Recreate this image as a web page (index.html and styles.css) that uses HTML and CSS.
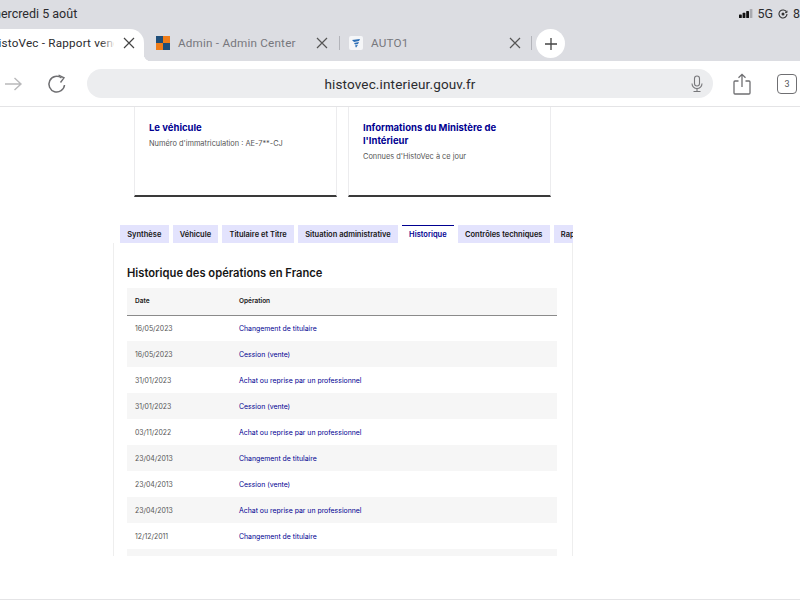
FILE: index.html
```html
<!DOCTYPE html>
<html lang="fr">
<head>
  <meta charset="UTF-8">
  <meta name="viewport" content="width=device-width, initial-scale=1.0">
  <title>HistoVec - Rapport vendeur</title>
  <link rel="stylesheet" href="styles.css">
</head>
<body>
  <header class="chrome">
    <div class="status-bar">
      <div class="status-date">mercredi 5 août</div>
      <div class="status-right">
        <svg class="signal" width="15" height="9" viewBox="0 0 15 9">
          <rect x="0" y="5.5" width="2.8" height="3.5" rx=".6" fill="#111"/>
          <rect x="3.6" y="3.8" width="2.8" height="5.2" rx=".6" fill="#111"/>
          <rect x="7.2" y="2" width="2.8" height="7" rx=".6" fill="#111"/>
          <rect x="10.8" y="0" width="2.6" height="9" rx=".6" fill="#a9aab0"/>
        </svg>
        <span>5G</span>
        <svg width="10" height="10" viewBox="0 0 10 10" fill="none" stroke="#333" stroke-width="1.1">
          <path d="M8.6 3.2A4 4 0 1 0 9 5"/>
          <path d="M9 1.6v2H7" stroke-width=".9"/>
          <circle cx="5" cy="5" r="1.5" fill="#333" stroke="none"/>
        </svg>
        <span>82</span>
      </div>
    </div>
    <div class="tab-strip">
      <div class="browser-tab active">
        <span class="tab-label">HistoVec - Rapport vendeur</span>
        <span class="tab-fade"></span>
        <svg class="tab-close" width="12" height="12" viewBox="0 0 12 12"><path d="M1 1l10 10M11 1L1 11" stroke="#444" stroke-width="1.2"/></svg>
      </div>
      <div class="browser-tab admin">
        <svg class="favicon" width="14" height="14" viewBox="0 0 14 14">
          <rect width="7" height="7" fill="#1f4e79"/>
          <rect x="7" width="7" height="7" fill="#ef7d1a"/>
          <rect y="7" width="7" height="7" fill="#ef7d1a"/>
          <rect x="7" y="7" width="7" height="7" fill="#1f4e79"/>
        </svg>
        <span class="tab-label">Admin - Admin Center</span>
        <svg class="tab-close" width="12" height="12" viewBox="0 0 12 12"><path d="M1 1l10 10M11 1L1 11" stroke="#555" stroke-width="1.2"/></svg>
      </div>
      <div class="tab-sep"></div>
      <div class="browser-tab auto">
        <svg class="favicon" width="14" height="14" viewBox="0 0 14 14">
          <rect width="14" height="14" rx="2" fill="#f5f6f8"/>
          <path d="M3 4l8-1-1 2-5 1zM5 7l5-1-1 2-3 .6zM6 9.4l3-.6-2 3z" fill="#2a6db5"/>
        </svg>
        <span class="tab-label">AUTO1</span>
        <svg class="tab-close" width="12" height="12" viewBox="0 0 12 12"><path d="M1 1l10 10M11 1L1 11" stroke="#555" stroke-width="1.2"/></svg>
      </div>
      <div class="tab-sep"></div>
      <div class="new-tab">
        <svg width="14" height="14" viewBox="0 0 14 14"><path d="M7 1v12M1 7h12" stroke="#444" stroke-width="1.3"/></svg>
      </div>
    </div>
    <div class="toolbar">
      <svg class="nav-arrow" width="20" height="16" viewBox="0 0 20 16" fill="none" stroke="#b9b9bb" stroke-width="1.4">
        <path d="M2 8h16M11.5 2l6.500 6-6.500 6"/>
      </svg>
      <svg class="reload" width="20" height="20" viewBox="0 0 20 20" fill="none" stroke="#6f6f72" stroke-width="1.5">
        <path d="M17.500 11a7.800 7.800 0 1 1-3-7"/>
        <path d="M11.500 1l5.500 2.800-3.500 4.700" stroke-width="1.400"/>
      </svg>
      <div class="address-bar">
        <span class="address-text">histovec.interieur.gouv.fr</span>
        <svg class="mic" width="12" height="18" viewBox="0 0 12 18" fill="none" stroke="#77777a" stroke-width="1.100">
          <rect x="3.500" y="1" width="5" height="10" rx="2.500"/>
          <path d="M1 8.500a5 5 0 0 0 10 0M6 13.500V16M2.500 16.500h7"/>
        </svg>
      </div>
      <svg class="share" width="18" height="22" viewBox="0 0 18 22" fill="none" stroke="#6f6f72" stroke-width="1.300">
        <path d="M5.500 8H2a1 1 0 0 0-1 1v11a1 1 0 0 0 1 1h14a1 1 0 0 0 1-1V9a1 1 0 0 0-1-1h-3.500"/>
        <path d="M9 14V1.500M5.500 4.800L9 1.300l3.500 3.500"/>
      </svg>
      <div class="tab-count">3</div>
    </div>
  </header>

  <main class="page">
    <section class="cards">
      <div class="info-card">
        <h3>Le véhicule</h3>
        <p>Numéro d'immatriculation : AE-7**-CJ</p>
      </div>
      <div class="info-card">
        <h3>Informations du Ministère de l'Intérieur</h3>
        <p>Connues d'HistoVec à ce jour</p>
      </div>
    </section>

    <nav class="tabs">
      <div class="tab">Synthèse</div>
      <div class="tab">Véhicule</div>
      <div class="tab">Titulaire et Titre</div>
      <div class="tab">Situation administrative</div>
      <div class="tab selected">Historique</div>
      <div class="tab">Contrôles techniques</div>
      <div class="tab">Rapport</div>
    </nav>

    <section class="panel">
      <h2>Historique des opérations en France</h2>
      <table>
        <thead>
          <tr><th class="col-date">Date</th><th>Opération</th></tr>
        </thead>
        <tbody>
          <tr><td>16/05/2023</td><td>Changement de titulaire</td></tr>
          <tr><td>16/05/2023</td><td>Cession (vente)</td></tr>
          <tr><td>31/01/2023</td><td>Achat ou reprise par un professionnel</td></tr>
          <tr><td>31/01/2023</td><td>Cession (vente)</td></tr>
          <tr><td>03/11/2022</td><td>Achat ou reprise par un professionnel</td></tr>
          <tr><td>23/04/2013</td><td>Changement de titulaire</td></tr>
          <tr><td>23/04/2013</td><td>Cession (vente)</td></tr>
          <tr><td>23/04/2013</td><td>Achat ou reprise par un professionnel</td></tr>
          <tr><td>12/12/2011</td><td>Changement de titulaire</td></tr>
          <tr><td>12/12/2011</td><td>Cession (vente)</td></tr>
        </tbody>
      </table>
    </section>
  </main>

  <div class="bottom-line"></div>
</body>
</html>
```

FILE: styles.css
```css
* {
  box-sizing: border-box;
  margin: 0;
  padding: 0;
}

html, body {
  height: 600px;
  overflow: hidden;
}

body {
  display: flex;
  flex-direction: column;
  background-color: #ffffff;
  font-family: Inter, "Liberation Sans", sans-serif;
}

/* browser chrome */
.chrome {
  flex: none;
  height: 107px;
  border-bottom: 1px solid #e4e4e6;
  background-color: #ffffff;
}

.status-bar {
  display: flex;
  justify-content: space-between;
  align-items: center;
  height: 26px;
  background-color: #dcdde2;
  font-family: Roboto, sans-serif;
  font-size: 12.500px;
  color: #2b2b2e;
  overflow: hidden;
}

.status-date {
  margin-left: -10px;
}

.status-right {
  display: flex;
  align-items: center;
  gap: 5px;
  margin-right: -7px;
  margin-top: 1px;
}

.signal {
  margin-right: -2px;
}

.tab-strip {
  display: flex;
  align-items: flex-start;
  height: 35px;
  padding-top: 3px;
  background-color: #dcdde2;
  font-family: Roboto, sans-serif;
  font-size: 11.700px;
  letter-spacing: .2px;
  color: #77777d;
}

.browser-tab {
  display: flex;
  align-items: center;
  height: 32px;
  padding-bottom: 4px;
  flex: none;
  white-space: nowrap;
}

.browser-tab.active {
  position: relative;
  width: 144px;
  background-color: #ffffff;
  border-radius: 0 14px 0 0;
  color: #2b2b2e;
}

/* little flare where the active tab meets the toolbar */
.browser-tab.active::after {
  content: "";
  position: absolute;
  left: 100%;
  bottom: 0;
  width: 7px;
  height: 7px;
  background: radial-gradient(circle at 100% 0, #dcdde2 7px, #ffffff 7.500px);
}

.browser-tab.active .tab-label {
  margin-left: -10px;
  width: 124px;
  flex: none;
  overflow: hidden;
}

.browser-tab.active .tab-close {
  position: absolute;
  left: 123px;
  top: 8px;
}

.tab-fade {
  position: absolute;
  left: 100px;
  top: 0;
  width: 16px;
  height: 100%;
  background: linear-gradient(to right, rgba(255, 255, 255, 0), #ffffff);
}

.browser-tab.admin {
  width: 195px;
  padding-left: 12px;
}

.browser-tab.admin .favicon {
  margin-right: 8px;
}

.browser-tab.admin .tab-close {
  margin-left: auto;
  margin-right: 11px;
}

.browser-tab.auto {
  width: 191px;
  padding-left: 9px;
}

.browser-tab.auto .favicon {
  margin-right: 8px;
}

.browser-tab.auto .tab-close {
  margin-left: auto;
  margin-right: 10px;
}

.tab-sep {
  flex: none;
  width: 1px;
  height: 14px;
  margin-top: 7px;
  background-color: #b3b4ba;
}

.new-tab {
  flex: none;
  display: flex;
  align-items: center;
  justify-content: center;
  width: 29px;
  height: 29px;
  margin-left: 4px;
  background-color: #ffffff;
  border-radius: 50%;
}

.toolbar {
  display: flex;
  align-items: center;
  height: 45px;
}

.nav-arrow {
  flex: none;
  margin-left: 3px;
}

.reload {
  flex: none;
  margin-left: 24px;
}

.address-bar {
  flex: none;
  position: relative;
  display: flex;
  align-items: center;
  justify-content: center;
  width: 626px;
  height: 29px;
  margin-left: 20px;
  background-color: #ecedef;
  border-radius: 15px;
  font-family: Roboto, sans-serif;
  font-size: 13.500px;
  letter-spacing: .15px;
  color: #2b2b2e;
}

.mic {
  position: absolute;
  right: 10px;
  top: 6px;
}

.share {
  flex: none;
  margin-left: 20px;
}

.tab-count {
  flex: none;
  display: flex;
  align-items: center;
  justify-content: center;
  width: 20px;
  height: 20px;
  margin-left: 26px;
  border: 1.300px solid #6f6f72;
  border-radius: 4px;
  font-family: Roboto, sans-serif;
  font-size: 9px;
  color: #55555a;
}

/* page content */
.page {
  flex: none;
  height: 449px;
  overflow: hidden;
}

.cards {
  display: flex;
  gap: 11px;
  margin-left: 134px;
}

.info-card {
  width: 203px;
  height: 90px;
  padding: 14px 14px 0;
  border-left: 1px solid #ececee;
  border-right: 1px solid #ececee;
  border-bottom: 2px solid #3a3a3a;
}

.info-card h3 {
  font-size: 9.500px;
  line-height: 13px;
  font-weight: 700;
  color: #000091;
}

.info-card p {
  margin-top: 4px;
  font-size: 7.400px;
  line-height: 12px;
  color: #555555;
}

.tabs {
  display: flex;
  gap: 4px;
  width: 453px;
  height: 18px;
  margin-top: 28px;
  margin-left: 120px;
  overflow: hidden;
}

.tab {
  flex: none;
  display: flex;
  align-items: center;
  height: 18px;
  padding: 0 7.200px;
  background-color: #e3e3fd;
  font-size: 7.500px;
  font-weight: 600;
  color: #161616;
  white-space: nowrap;
}

.tab.selected {
  background-color: #ffffff;
  border-top: 1px solid #000091;
  color: #000091;
}

.panel {
  width: 460px;
  height: 313px;
  margin-left: 113px;
  padding: 0 15px 0 13px;
  border-left: 1px solid #eeeeee;
  border-right: 1px solid #eeeeee;
  overflow: hidden;
}

.panel h2 {
  height: 45px;
  padding-top: 22px;
  font-size: 11.200px;
  line-height: 16px;
  font-weight: 600;
  color: #161616;
}

table {
  width: 100%;
  border-collapse: collapse;
  table-layout: fixed;
}

th {
  height: 27px;
  padding: 0 8px;
  background-color: #f6f6f6;
  border-bottom: 1px solid #8a8a8a;
  text-align: left;
  font-size: 6.500px;
  font-weight: 600;
  color: #161616;
}

.col-date {
  width: 104px;
}

td {
  height: 26px;
  padding: 0 8px;
  font-size: 6.900px;
  color: #000091;
}

td:first-child {
  color: #555555;
}

tbody tr:nth-child(even) td {
  background-color: #f6f6f6;
}

.bottom-line {
  flex: none;
  height: 1px;
  margin-top: 43px;
  background-color: #e4e4e6;
}
```
